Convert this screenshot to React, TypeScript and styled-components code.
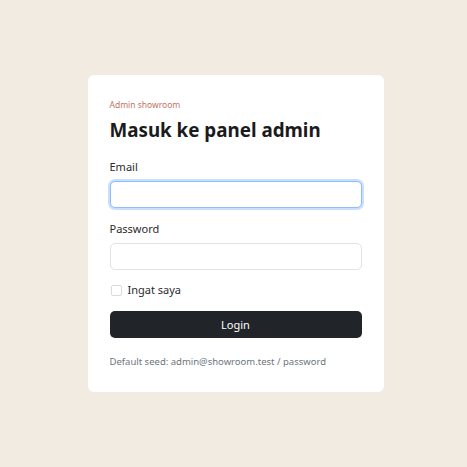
import React from "react";
import styled, { createGlobalStyle } from "styled-components";

const Global = createGlobalStyle`
  html, body { margin: 0; padding: 0; }
  body {
    background: #f2ebe2;
    font-family: "Noto Sans", "Open Sans", sans-serif;
    color: #212529;
  }
  * { box-sizing: border-box; }
`;

const Page = styled.main`
  min-height: 467px;
  display: flex;
  align-items: center;
  justify-content: center;
  padding: 0 0 0 4px;
`;

const Card = styled.section`
  width: 296px;
  background: #ffffff;
  border-radius: 6px;
  padding: 24px 22px 23px;
  display: flex;
  flex-direction: column;
`;

const Eyebrow = styled.p`
  margin: 0;
  font-size: 8.5px;
  line-height: 12px;
  color: #bf7464;
`;

const Title = styled.h1`
  margin: 6px 0 0;
  font-size: 18.8px;
  line-height: 26px;
  font-weight: 700;
  color: #1b1b1b;
`;

const Form = styled.form`
  margin-top: 16px;
  display: flex;
  flex-direction: column;
`;

const Field = styled.div<{ $gap?: number }>`
  display: flex;
  flex-direction: column;
  margin-bottom: ${(p) => p.$gap ?? 13}px;
`;

const Label = styled.label`
  font-size: 11px;
  line-height: 16px;
  color: #2b2b2b;
  margin-bottom: 6px;
`;

const Input = styled.input<{ $focused?: boolean }>`
  height: 27px;
  width: 100%;
  border-radius: 5px;
  border: 1px solid ${(p) => (p.$focused ? "#8fbcfb" : "#e1e3e6")};
  box-shadow: ${(p) => (p.$focused ? "0 0 0 2px rgba(13,110,253,0.22)" : "none")};
  outline: none;
  padding: 0 8px;
  font: inherit;
  font-size: 11px;
  background: #fff;
`;

const CheckRow = styled.label`
  display: flex;
  align-items: center;
  gap: 6px;
  font-size: 11px;
  line-height: 16px;
  color: #2b2b2b;
  margin-bottom: 13px;
`;

const Box = styled.span`
  width: 11px;
  height: 11px;
  border: 1px solid #d9dcdf;
  border-radius: 2px;
  margin-left: 1px;
  background: #fff;
`;

const Button = styled.button`
  height: 27px;
  width: 100%;
  border: none;
  border-radius: 5px;
  background: #212529;
  color: #ffffff;
  font: inherit;
  font-size: 11px;
  cursor: pointer;
`;

const Hint = styled.p`
  margin: 17px 0 0;
  font-size: 9.5px;
  line-height: 14px;
  color: #6c757d;
`;

export default function App() {
  return (
    <>
      <Global />
      <Page>
        <Card>
          <Eyebrow>Admin showroom</Eyebrow>
          <Title>Masuk ke panel admin</Title>
          <Form onSubmit={(e) => e.preventDefault()}>
            <Field>
              <Label>Email</Label>
              <Input type="email" $focused />
            </Field>
            <Field $gap={12}>
              <Label>Password</Label>
              <Input type="password" />
            </Field>
            <CheckRow>
              <Box />
              Ingat saya
            </CheckRow>
            <Button type="submit">Login</Button>
          </Form>
          <Hint>Default seed: admin@showroom.test / password</Hint>
        </Card>
      </Page>
    </>
  );
}
